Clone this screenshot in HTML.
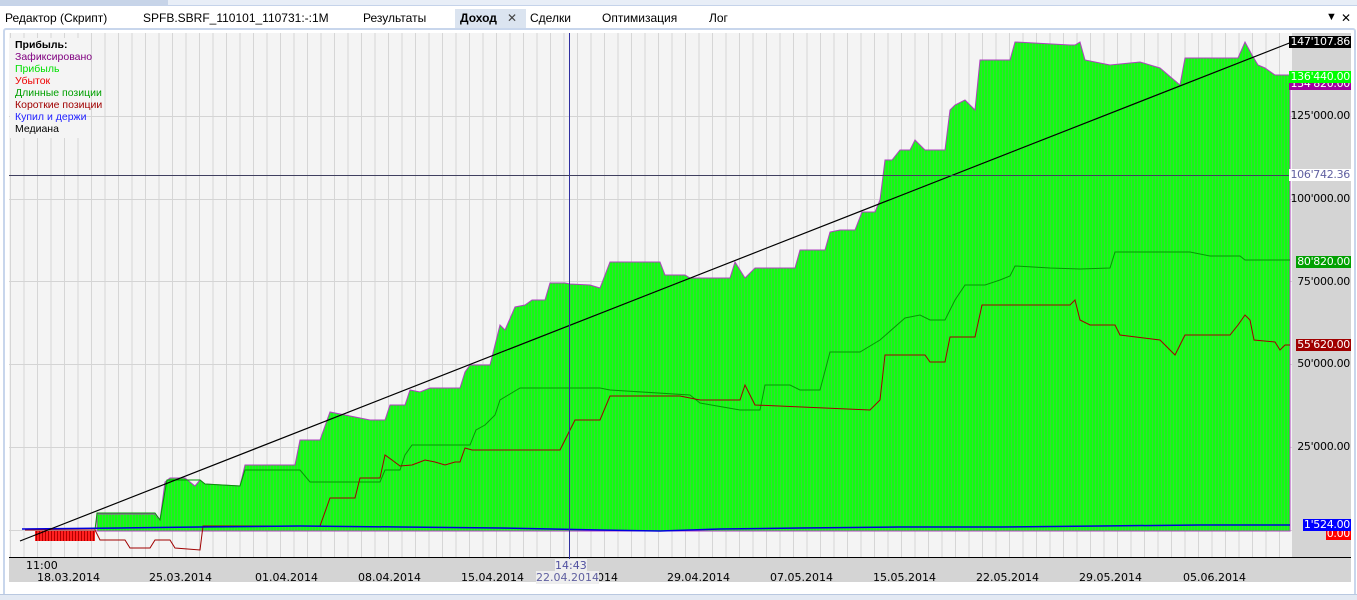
<!DOCTYPE html>
<html><head><meta charset="utf-8"><style>
body{margin:0;width:1357px;height:599px;background:#fff;font-family:"Liberation Sans","DejaVu Sans",sans-serif;overflow:hidden;position:relative}
.top{position:absolute;left:0;top:0;width:1357px;height:5px;background:#e8eef7;border-bottom:1px solid #c5d3ea}
.top i{position:absolute;left:0;top:0;width:168px;height:5px;background:#c7d4e8}
.tabs{position:absolute;top:9px;left:0;font-size:12px;color:#000;width:1357px}
.tabs span{position:absolute;top:2px;white-space:nowrap}
.act{position:absolute;left:455px;top:9px;width:71px;height:19px;background:#dbe4f0}
.frame{position:absolute;left:3px;top:28px;width:1349px;height:566px;border:2px solid #c8d6ec;border-radius:3px;background:#fff}
.bot{position:absolute;left:0;top:594px;width:1357px;height:5px;background:#e3e9f3;border-top:1px solid #b9c8e0}
.leg{position:absolute;left:15px;top:39px;font-size:10.5px;line-height:12px}
.lbl{position:absolute;font-size:11px;right:6px;padding:0 1px;line-height:12px;font-family:"DejaVu Sans","Liberation Sans",sans-serif;letter-spacing:-0.3px}
</style></head><body>
<div class="top"><i></i></div>
<div class="act"></div>
<div class="tabs">
<span style="left:5px">Редактор (Скрипт)</span>
<span style="left:143px">SPFB.SBRF_110101_110731:-:1M</span>
<span style="left:363px">Результаты</span>
<span style="left:460px;font-weight:bold">Доход</span>
<span style="left:507px;color:#444">✕</span>
<span style="left:530px">Сделки</span>
<span style="left:602px">Оптимизация</span>
<span style="left:709px">Лог</span>
<span style="left:1326px;font-size:11px">▼</span>
<span style="left:1341px">✕</span>
</div>
<div class="frame"></div>
<svg style="position:absolute;left:0;top:0" width="1357" height="599">
<defs><pattern id="st" width="3" height="10" patternUnits="userSpaceOnUse"><rect width="3" height="10" fill="#10ff10"/><rect width="1" height="10" fill="#3ad83a"/></pattern>
<pattern id="rs" width="3" height="10" patternUnits="userSpaceOnUse"><rect width="3" height="10" fill="#ff2020"/><rect width="1" height="10" fill="#b00000"/></pattern>
<pattern id="vg" x="10" width="13.5" height="10" patternUnits="userSpaceOnUse"><rect x="0" width="1" height="10" fill="#d6d6d6"/></pattern></defs>
<rect x="9" y="33" width="1283" height="524" fill="#f4f4f4"/>
<rect x="9" y="33" width="1283" height="524" fill="url(#vg)"/>
<g stroke="#d4d4d4"><line x1="9" x2="1292" y1="116.5" y2="116.5"/><line x1="9" x2="1292" y1="199.5" y2="199.5"/><line x1="9" x2="1292" y1="281.5" y2="281.5"/><line x1="9" x2="1292" y1="364.5" y2="364.5"/><line x1="9" x2="1292" y1="447.5" y2="447.5"/><line x1="9" x2="1292" y1="530.5" y2="530.5"/></g>
<rect x="1292" y="33" width="59" height="549" fill="#d4d4d4"/>
<rect x="9" y="557" width="1283" height="25" fill="#d4d4d4"/>
<line x1="9" x2="1351" y1="557.5" y2="557.5" stroke="#000"/>
<rect x="10" y="38" width="72" height="100" fill="#f4f4f4"/>
<path fill="url(#st)" stroke="#b040c0" stroke-width="1" d="M97,531 L97,514 L155,514 L160,520 L165,482 L170,478 L185,478 L195,486 L200,480 L205,484 L240,486 L245,465 L295,465 L300,440 L320,440 L330,412 L370,420 L385,420 L390,405 L405,405 L410,390 L420,392 L430,388 L460,388 L465,372 L470,365 L490,365 L500,325 L505,330 L515,307 L525,305 L532,300 L545,300 L550,283 L565,283 L570,284 L590,285 L600,288 L610,262 L660,262 L665,275 L685,275 L690,278 L730,278 L735,262 L740,270 L745,278 L755,268 L795,268 L800,250 L825,250 L830,232 L840,230 L855,230 L862,212 L868,212 L875,212 L880,200 L885,160 L892,160 L900,150 L910,150 L915,140 L925,150 L945,150 L950,110 L955,105 L965,100 L975,110 L980,60 L1010,60 L1015,42 L1070,45 L1075,45 L1080,42 L1085,60 L1110,65 L1140,62 L1160,68 L1180,85 L1185,58 L1238,58 L1245,42 L1252,55 L1258,65 L1265,68 L1275,75 L1290,75 L1290,531 Z"/>
<path fill="url(#rs)" d="M35,531 L95,531 L95,541 L35,541 Z"/>
<path fill="none" stroke="#009900" d="M25,530 L95,530 L97,513 L155,513 L160,520 L167,480 L200,480 L205,484 L240,486 L245,470 L300,470 L310,482 L380,482 L385,470 L400,470 L405,455 L412,445 L470,445 L476,430 L485,425 L495,415 L500,400 L520,388 L600,388 L610,390 L690,395 L700,403 L740,410 L760,410 L765,385 L790,385 L800,390 L820,390 L830,352 L860,352 L880,340 L905,318 L920,315 L930,320 L945,320 L955,300 L965,285 L985,285 L1000,280 L1010,276 L1015,266 L1050,268 L1080,269 L1110,268 L1115,252 L1190,252 L1210,256 L1240,256 L1245,260 L1290,260"/>
<path fill="none" stroke="#a00000" d="M25,530 L95,530 L100,540 L125,540 L130,548 L150,548 L155,540 L170,540 L175,548 L200,550 L203,526 L320,526 L330,498 L355,498 L360,478 L380,478 L385,455 L392,460 L400,466 L412,465 L420,462 L425,460 L435,462 L445,465 L455,462 L460,462 L465,448 L472,450 L560,450 L565,440 L575,420 L600,420 L610,396 L680,396 L700,400 L740,400 L745,385 L755,405 L870,410 L880,400 L885,355 L925,355 L930,362 L945,362 L950,337 L975,337 L982,305 L1070,305 L1075,300 L1080,320 L1090,325 L1115,325 L1120,335 L1160,340 L1165,345 L1175,355 L1180,345 L1185,335 L1230,335 L1238,325 L1245,315 L1250,320 L1254,340 L1275,342 L1280,350 L1285,345 L1290,345"/>
<path fill="none" stroke="#0000dd" stroke-width="1.5" d="M22,529 L120,528 L200,527 L300,526 L400,527 L500,528 L600,530 L660,531 L720,529 L800,528 L900,527 L1000,527 L1100,526 L1200,525 L1290,525"/>
<line x1="20" y1="541" x2="1292" y2="42" stroke="#000" stroke-width="1.2"/>
<line x1="569.5" y1="33" x2="569.5" y2="570" stroke="#3030a0"/>
<line x1="9" y1="175.5" x2="1292" y2="175.5" stroke="#404060"/>
</svg>
<div class="leg">
<div style="font-weight:bold">Прибыль:</div>
<div style="color:#800080">Зафиксировано</div>
<div style="color:#00e000">Прибыль</div>
<div style="color:#ee0000">Убыток</div>
<div style="color:#00a000">Длинные позиции</div>
<div style="color:#a00000">Короткие позиции</div>
<div style="color:#2020ff">Купил и держи</div>
<div style="color:#000">Медиана</div>
</div>
<div class="lbl" style="top:36px;background:#000;color:#fff">147'107.86</div>
<div class="lbl" style="top:78px;background:#a000a0;color:#fff">134'820.00</div>
<div class="lbl" style="top:71px;background:#00ff00;color:#fff">136'440.00</div>
<div class="lbl" style="top:110px">125'000.00</div>
<div class="lbl" style="top:169px;background:#fff;color:#6060a0">106'742.36</div>
<div class="lbl" style="top:193px">100'000.00</div>
<div class="lbl" style="top:256px;background:#00a000;color:#fff">80'820.00</div>
<div class="lbl" style="top:276px">75'000.00</div>
<div class="lbl" style="top:339px;background:#a00000;color:#fff">55'620.00</div>
<div class="lbl" style="top:358px">50'000.00</div>
<div class="lbl" style="top:441px">25'000.00</div>
<div class="lbl" style="background:#ff0000;color:#fff;top:528px">0.00</div>
<div class="lbl" style="top:519px;background:#0000ff;color:#fff">1'524.00</div>
<div style="position:absolute;top:559px;left:0;font-size:11px;width:1300px;font-family:'DejaVu Sans',sans-serif">
<span style="position:absolute;left:26px">11:00</span>
<span style="position:absolute;left:555px;color:#5050a0;background:#eee">14:43</span>
<span style="position:absolute;top:12px;left:37px">18.03.2014</span>
<span style="position:absolute;top:12px;left:149px">25.03.2014</span>
<span style="position:absolute;top:12px;left:255px">01.04.2014</span>
<span style="position:absolute;top:12px;left:358px">08.04.2014</span>
<span style="position:absolute;top:12px;left:461px">15.04.2014</span>
<span style="position:absolute;top:12px;left:590px">2014</span>
<span style="position:absolute;top:12px;left:536px;color:#6060a0;background:#eee">22.04.2014</span>
<span style="position:absolute;top:12px;left:667px">29.04.2014</span>
<span style="position:absolute;top:12px;left:770px">07.05.2014</span>
<span style="position:absolute;top:12px;left:873px">15.05.2014</span>
<span style="position:absolute;top:12px;left:976px">22.05.2014</span>
<span style="position:absolute;top:12px;left:1079px">29.05.2014</span>
<span style="position:absolute;top:12px;left:1183px">05.06.2014</span>
</div>
<div class="bot"></div>
</body></html>
